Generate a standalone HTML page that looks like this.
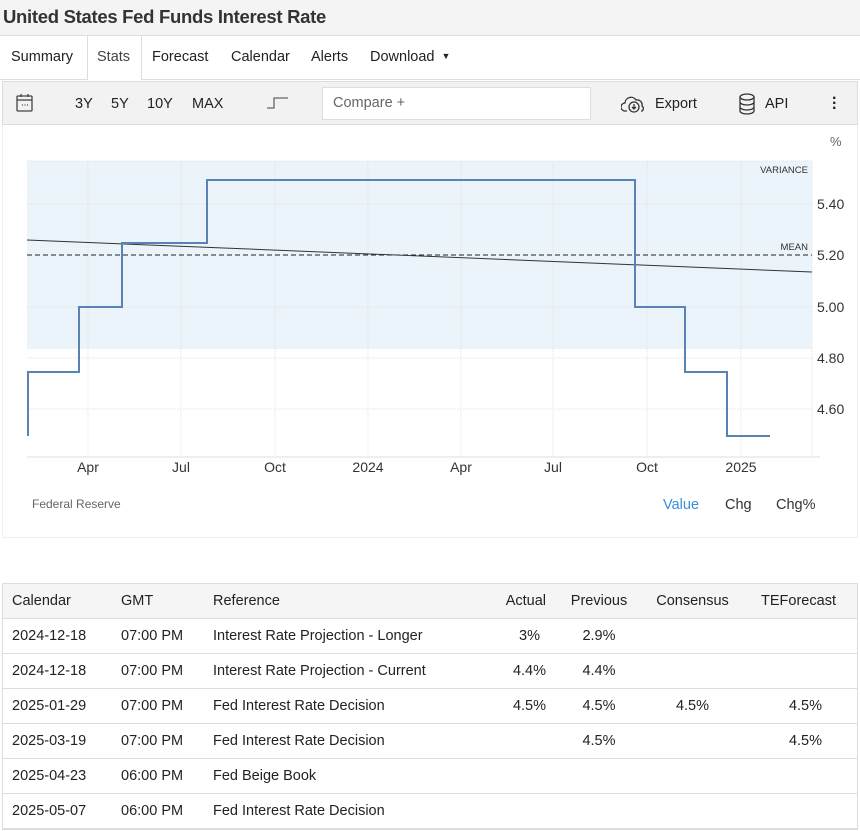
<!DOCTYPE html>
<html><head><meta charset="utf-8"><style>
*{margin:0;padding:0;box-sizing:border-box}
body{width:860px;height:831px;background:#fff;font-family:"Liberation Sans",Arial,sans-serif;color:#222;position:relative;overflow:hidden}
.a{position:absolute}
.t{font-size:14.5px;white-space:nowrap}
table{position:absolute;left:2px;top:583px;width:856px;border-collapse:collapse;font-size:14.5px}
td,th{height:35px;border-top:1px solid #ddd;font-weight:normal;text-align:left;padding-left:10px;white-space:nowrap}
th{background:#f5f5f5}
.r{text-align:right;padding-right:12px;padding-left:0}
.c{text-align:center;padding-left:0}
</style></head><body>
<div class="a" style="left:0;top:0;width:860px;height:36px;background:#f4f4f4;border-bottom:1px solid #ddd"></div>
<div class="a" style="left:3px;top:6px;font-size:18.5px;font-weight:bold;color:#333;letter-spacing:-0.3px">United States Fed Funds Interest Rate</div>
<div class="a" style="left:87px;top:36px;width:55px;height:44px;border-left:1px solid #ddd;border-right:1px solid #ddd;background:#fff"></div>
<div class="a" style="left:0;top:79px;width:87px;border-top:1px solid #ddd"></div>
<div class="a" style="left:142px;top:79px;width:718px;border-top:1px solid #ddd"></div>
<div class="a t" style="left:11px;top:49px">Summary</div>
<div class="a t" style="left:97px;top:49px;color:#444">Stats</div>
<div class="a t" style="left:152px;top:49px">Forecast</div>
<div class="a t" style="left:231px;top:49px">Calendar</div>
<div class="a t" style="left:311px;top:49px">Alerts</div>
<div class="a t" style="left:370px;top:49px">Download <span style="font-size:9px;position:relative;top:-2px;margin-left:3px">▼</span></div>
<div class="a" style="left:2px;top:81px;width:856px;height:44px;background:#f2f2f2;border:1px solid #ddd"></div>
<svg class="a" style="left:15px;top:93px" width="20" height="20" viewBox="0 0 20 20" fill="none" stroke="#444" stroke-width="1.3"><rect x="2" y="3" width="15" height="15" rx="1"/><line x1="2" y1="7" x2="17" y2="7"/><line x1="6" y1="1" x2="6" y2="4"/><line x1="13" y1="1" x2="13" y2="4"/><line x1="7" y1="12" x2="8" y2="12"/><line x1="9.5" y1="12" x2="10.5" y2="12"/><line x1="12" y1="12" x2="13" y2="12"/></svg>
<div class="a t" style="left:75px;top:96px">3Y</div>
<div class="a t" style="left:111px;top:96px">5Y</div>
<div class="a t" style="left:147px;top:96px">10Y</div>
<div class="a t" style="left:192px;top:96px">MAX</div>
<svg class="a" style="left:266px;top:95px" width="24" height="16" fill="none" stroke="#666" stroke-width="1.3"><path d="M1 13H8V3H22"/></svg>
<div class="a" style="left:322px;top:87px;width:269px;height:33px;background:#fff;border:1px solid #ddd"></div>
<div class="a t" style="left:333px;top:95px;color:#666">Compare +</div>
<svg class="a" style="left:621px;top:94px" width="26" height="20" fill="none" stroke="#333" stroke-width="1.3"><path d="M6 17H4a4 4 0 0 1 0-8 6 6 0 0 1 11-3 5 5 0 0 1 6 6 3 3 0 0 1 0 5h-1"/><circle cx="13" cy="13" r="5"/><path d="M13 10v5M11 13l2 2 2-2"/></svg>
<div class="a t" style="left:655px;top:96px">Export</div>
<svg class="a" style="left:737px;top:93px" width="20" height="22" fill="none" stroke="#333" stroke-width="1.3"><ellipse cx="10" cy="4" rx="7" ry="3"/><path d="M3 4v14c0 1.7 3 3 7 3s7-1.3 7-3V4M3 9c0 1.7 3 3 7 3s7-1.3 7-3M3 14c0 1.7 3 3 7 3s7-1.3 7-3"/></svg>
<div class="a t" style="left:765px;top:96px">API</div>
<div class="a" style="left:832px;top:96px;font-size:16px;line-height:5px;font-weight:bold">·<br>·<br>·</div>
<div class="a" style="left:2px;top:125px;width:856px;height:413px;border:1px solid #eee;border-top:none"></div>
<svg class="a" style="left:0;top:130px" width="860" height="420" font-family="Liberation Sans,Arial,sans-serif">
<g transform="translate(0,-130)">
<rect x="27" y="161" width="785" height="188" fill="#eaf4fa"/>
<g stroke="#e2e2e2" stroke-dasharray="1,1"><line x1="27" y1="161" x2="812" y2="161"/><line x1="27" y1="204" x2="812" y2="204"/><line x1="27" y1="307" x2="812" y2="307"/><line x1="27" y1="358" x2="812" y2="358"/><line x1="27" y1="409" x2="812" y2="409"/>
<line x1="88" y1="161" x2="88" y2="457"/><line x1="181" y1="161" x2="181" y2="457"/><line x1="275" y1="161" x2="275" y2="457"/><line x1="368" y1="161" x2="368" y2="457"/><line x1="461" y1="161" x2="461" y2="457"/><line x1="553" y1="161" x2="553" y2="457"/><line x1="647" y1="161" x2="647" y2="457"/><line x1="741" y1="161" x2="741" y2="457"/><line x1="812" y1="161" x2="812" y2="457"/></g>
<line x1="27" y1="457" x2="820" y2="457" stroke="#ddd"/>
<line x1="27" y1="255" x2="812" y2="255" stroke="#222" stroke-dasharray="5,3"/>
<line x1="27" y1="240" x2="812" y2="272" stroke="#333" stroke-width="1"/>
<path d="M28 436V372H79V307H122V243H207V180H635V307H685V372H727V436H770" fill="none" stroke="#5a83b5" stroke-width="2"/>
<g font-size="14" fill="#333"><text x="817" y="209">5.40</text><text x="817" y="260">5.20</text><text x="817" y="312">5.00</text><text x="817" y="363">4.80</text><text x="817" y="414">4.60</text>
<text x="830" y="146" font-size="13" fill="#666">%</text>
<g text-anchor="middle"><text x="88" y="472">Apr</text><text x="181" y="472">Jul</text><text x="275" y="472">Oct</text><text x="368" y="472">2024</text><text x="461" y="472">Apr</text><text x="553" y="472">Jul</text><text x="647" y="472">Oct</text><text x="741" y="472">2025</text></g></g>
<g font-size="9.5" fill="#333" text-anchor="end"><text x="808" y="173">VARIANCE</text><text x="808" y="250">MEAN</text></g>
<text x="32" y="508" font-size="12" fill="#666">Federal Reserve</text>
<text x="663" y="509" font-size="14.5" fill="#3a8fd6">Value</text>
<text x="725" y="509" font-size="14.5" fill="#333">Chg</text>
<text x="776" y="509" font-size="14.5" fill="#333">Chg%</text>
</g></svg>
<table>
<tr><th style="width:109px">Calendar</th><th style="width:92px">GMT</th><th>Reference</th><th class="r" style="width:66px">Actual</th><th class="c" style="width:82px">Previous</th><th class="c" style="width:105px">Consensus</th><th class="c" style="width:113px;padding-right:6px">TEForecast</th></tr>
<tr><td>2024-12-18</td><td>07:00 PM</td><td>Interest Rate Projection - Longer</td><td class="r" style="padding-right:18px">3%</td><td class="c">2.9%</td><td></td><td></td></tr>
<tr><td>2024-12-18</td><td>07:00 PM</td><td>Interest Rate Projection - Current</td><td class="r">4.4%</td><td class="c">4.4%</td><td></td><td></td></tr>
<tr><td>2025-01-29</td><td>07:00 PM</td><td>Fed Interest Rate Decision</td><td class="r">4.5%</td><td class="c">4.5%</td><td class="c">4.5%</td><td class="r" style="padding-right:36px">4.5%</td></tr>
<tr><td>2025-03-19</td><td>07:00 PM</td><td>Fed Interest Rate Decision</td><td></td><td class="c">4.5%</td><td></td><td class="r" style="padding-right:36px">4.5%</td></tr>
<tr><td>2025-04-23</td><td>06:00 PM</td><td>Fed Beige Book</td><td></td><td></td><td></td><td></td></tr>
<tr><td>2025-05-07</td><td>06:00 PM</td><td>Fed Interest Rate Decision</td><td></td><td></td><td></td><td></td></tr>
</table>
<div class="a" style="left:2px;top:828px;width:856px;border-top:2px solid #ddd"></div>
<div class="a" style="left:2px;top:583px;height:247px;border-left:1px solid #ddd"></div>
<div class="a" style="left:857px;top:583px;height:247px;border-left:1px solid #ddd"></div>
</body></html>
